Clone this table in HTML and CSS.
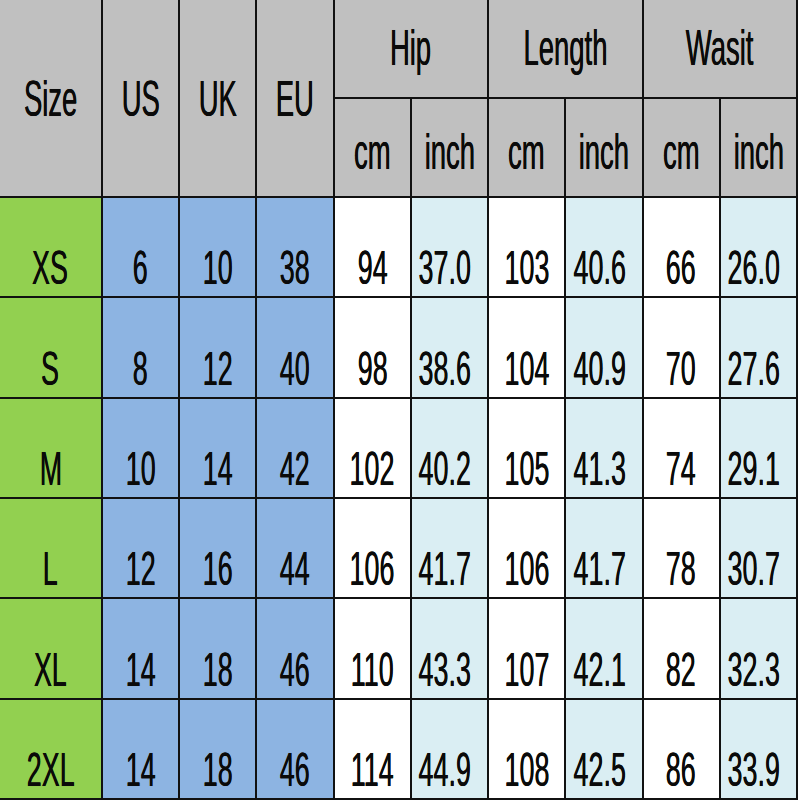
FILE: index.html
```html
<!DOCTYPE html>
<html>
<head>
<meta charset="utf-8">
<link rel="stylesheet" href="styles.css">
</head>
<body>
<div class="chart">
  <div class="cell hd tall"><span class="t">Size</span></div>
  <div class="cell hd tall"><span class="t">US</span></div>
  <div class="cell hd tall"><span class="t">UK</span></div>
  <div class="cell hd tall"><span class="t">EU</span></div>
  <div class="cell hd group"><span class="t">Hip</span></div>
  <div class="cell hd group"><span class="t">Length</span></div>
  <div class="cell hd group"><span class="t">Wasit</span></div>
  <div class="cell hd unit"><span class="t">cm</span></div>
  <div class="cell hd unit"><span class="t">inch</span></div>
  <div class="cell hd unit"><span class="t">cm</span></div>
  <div class="cell hd unit"><span class="t">inch</span></div>
  <div class="cell hd unit"><span class="t">cm</span></div>
  <div class="cell hd unit"><span class="t">inch</span></div>

  <div class="cell sz"><span class="t">XS</span></div>
  <div class="cell reg"><span class="t">6</span></div>
  <div class="cell reg"><span class="t">10</span></div>
  <div class="cell reg"><span class="t">38</span></div>
  <div class="cell cm"><span class="t">94</span></div>
  <div class="cell in"><span class="t">37.0</span></div>
  <div class="cell cm"><span class="t">103</span></div>
  <div class="cell in"><span class="t">40.6</span></div>
  <div class="cell cm"><span class="t">66</span></div>
  <div class="cell in"><span class="t">26.0</span></div>

  <div class="cell sz"><span class="t">S</span></div>
  <div class="cell reg"><span class="t">8</span></div>
  <div class="cell reg"><span class="t">12</span></div>
  <div class="cell reg"><span class="t">40</span></div>
  <div class="cell cm"><span class="t">98</span></div>
  <div class="cell in"><span class="t">38.6</span></div>
  <div class="cell cm"><span class="t">104</span></div>
  <div class="cell in"><span class="t">40.9</span></div>
  <div class="cell cm"><span class="t">70</span></div>
  <div class="cell in"><span class="t">27.6</span></div>

  <div class="cell sz"><span class="t">M</span></div>
  <div class="cell reg"><span class="t">10</span></div>
  <div class="cell reg"><span class="t">14</span></div>
  <div class="cell reg"><span class="t">42</span></div>
  <div class="cell cm"><span class="t">102</span></div>
  <div class="cell in"><span class="t">40.2</span></div>
  <div class="cell cm"><span class="t">105</span></div>
  <div class="cell in"><span class="t">41.3</span></div>
  <div class="cell cm"><span class="t">74</span></div>
  <div class="cell in"><span class="t">29.1</span></div>

  <div class="cell sz"><span class="t">L</span></div>
  <div class="cell reg"><span class="t">12</span></div>
  <div class="cell reg"><span class="t">16</span></div>
  <div class="cell reg"><span class="t">44</span></div>
  <div class="cell cm"><span class="t">106</span></div>
  <div class="cell in"><span class="t">41.7</span></div>
  <div class="cell cm"><span class="t">106</span></div>
  <div class="cell in"><span class="t">41.7</span></div>
  <div class="cell cm"><span class="t">78</span></div>
  <div class="cell in"><span class="t">30.7</span></div>

  <div class="cell sz"><span class="t">XL</span></div>
  <div class="cell reg"><span class="t">14</span></div>
  <div class="cell reg"><span class="t">18</span></div>
  <div class="cell reg"><span class="t">46</span></div>
  <div class="cell cm"><span class="t">110</span></div>
  <div class="cell in"><span class="t">43.3</span></div>
  <div class="cell cm"><span class="t">107</span></div>
  <div class="cell in"><span class="t">42.1</span></div>
  <div class="cell cm"><span class="t">82</span></div>
  <div class="cell in"><span class="t">32.3</span></div>

  <div class="cell sz"><span class="t">2XL</span></div>
  <div class="cell reg"><span class="t">14</span></div>
  <div class="cell reg"><span class="t">18</span></div>
  <div class="cell reg"><span class="t">46</span></div>
  <div class="cell cm"><span class="t">114</span></div>
  <div class="cell in"><span class="t">44.9</span></div>
  <div class="cell cm"><span class="t">108</span></div>
  <div class="cell in"><span class="t">42.5</span></div>
  <div class="cell cm"><span class="t">86</span></div>
  <div class="cell in"><span class="t">33.9</span></div>
</div>
</body>
</html>
```

FILE: styles.css
```css
html, body {
  margin: 0;
  padding: 0;
  background: #ffffff;
}

.chart {
  box-sizing: border-box;
  width: 798px;
  height: 800px;
  padding: 0 2px 2px 0;
  background: #111111;
  display: grid;
  grid-template-columns: 101px repeat(9, 1fr);
  grid-template-rows: 97px 97px repeat(6, 1fr);
  gap: 2px;
  font-family: "Liberation Sans", Arial, sans-serif;
  color: #0a0a0a;
}

.cell {
  display: flex;
  justify-content: center;
  align-items: flex-end;
  padding-bottom: 4px;
  overflow: hidden;
}

.t {
  display: inline-block;
  font-size: 48px;
  line-height: 48px;
  transform: scaleX(0.56);
  white-space: nowrap;
  text-shadow: 0 0 0.6px #000, 0 0 1px rgba(90, 60, 0, 0.35);
}

.hd {
  background: #c0c0c0;
  align-items: center;
  padding-bottom: 0;
}

.hd .t {
  font-size: 50px;
  line-height: 50px;
  transform: scaleX(0.55);
}

.tall {
  grid-row: span 2;
  padding-top: 2px;
}

.group {
  grid-column: span 2;
  padding-bottom: 2px;
}

.unit {
  padding-top: 8px;
}

.sz {
  background: #92d050;
}

.reg {
  background: #8db4e2;
}

.cm {
  background: #ffffff;
}

.in {
  background: #daeef3;
  padding-right: 9px;
}

.hd.unit:nth-child(9),
.hd.unit:nth-child(11),
.hd.unit:nth-child(13) {
  padding-right: 0;
}
```
